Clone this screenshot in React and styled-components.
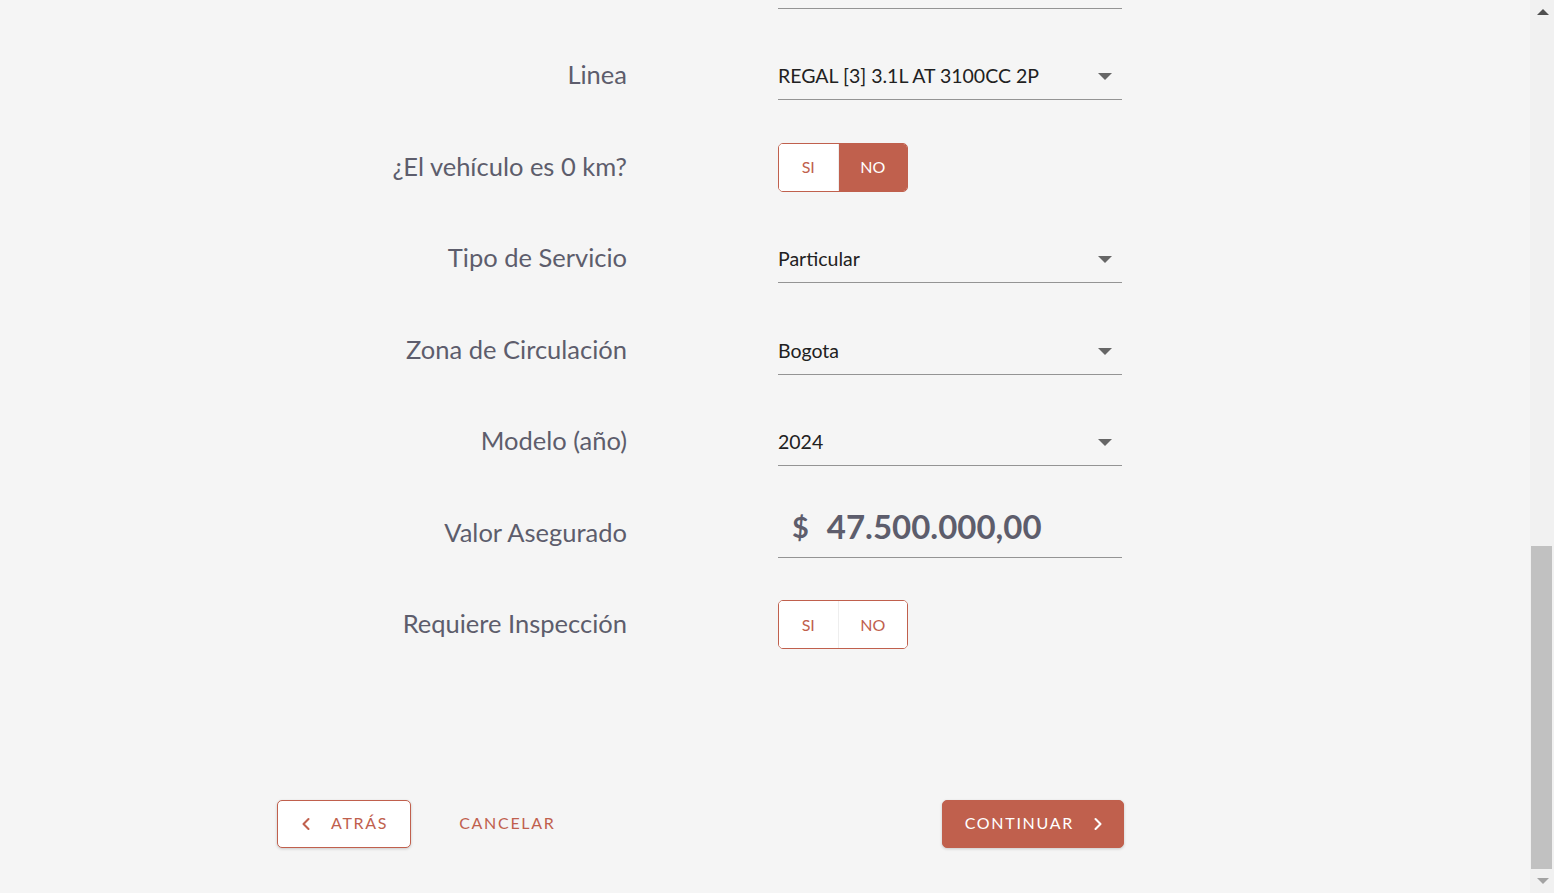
import { createGlobalStyle } from 'styled-components'
import styled from 'styled-components'
import { ChevronLeft, ChevronRight } from 'lucide-react'

const accent = '#c0604d'

const GlobalStyle = createGlobalStyle`
html, body {
    margin: 0;
    padding: 0;
    height: 100%;
    overflow: hidden;
    background: #f5f5f5;
    font-family: Lato, "Open Sans", sans-serif;
}
`

const Screen = styled.div`
display: flex;
height: 100vh;
width: 100vw;
`

const Viewport = styled.main`
flex: 1;
display: flex;
flex-direction: column;
justify-content: flex-end;
overflow: hidden;
`

const Content = styled.div`
width: 847px;
margin-left: 277px;
padding-bottom: 45px;
`

const Row = styled.div`
display: grid;
grid-template-columns: 350px 344px;
column-gap: 151px;
align-items: center;
height: 91.5px;
`

const Label = styled.label`
text-align: right;
font-size: 25.5px;
color: #5d5d6c;
margin-top: -2px;
`

const Select = styled.div`
display: flex;
align-items: center;
justify-content: space-between;
height: 50px;
box-sizing: border-box;
padding-top: 2px;
border-bottom: 1px solid #949494;
font-size: 19.5px;
color: #212121;
`

const Arrow = styled.span`
width: 0;
height: 0;
margin: 2px 10px 0 0;
border-left: 7px solid transparent;
border-right: 7px solid transparent;
border-top: 7px solid #666;
`

const Money = styled.div`
display: flex;
align-items: center;
height: 50px;
box-sizing: border-box;
padding-left: 14px;
padding-bottom: 12px;
border-bottom: 1px solid #949494;
color: #5d5d6c;
font-weight: 700;
`

const Currency = styled.span`
font-size: 29px;
margin-right: 18px;
`

const Amount = styled.span`
font-size: 33px;
`

const Toggle = styled.div`
display: flex;
width: 130px;
height: 49px;
margin-top: 1px;
box-sizing: border-box;
border: 1px solid ${accent};
border-radius: 5px;
overflow: hidden;
background: #fff;
`

const ToggleOption = styled.button`
display: flex;
align-items: center;
justify-content: center;
width: ${p => p.$wide ? 70 : 59}px;
border: none;
padding: 0 0 1px;
font-family: inherit;
font-size: 16px;
cursor: pointer;
color: ${p => p.$active ? '#fff' : accent};
background: ${p => p.$active ? accent : '#fff'};
& + & {
    border-left: 1px solid ${p => p.$active ? accent : '#eeeeee'};
}
`

const Actions = styled.div`
display: flex;
align-items: center;
margin-top: 130px;
`

const Button = styled.button`
display: flex;
align-items: center;
gap: ${p => p.$gap || 0}px;
height: 48px;
box-sizing: border-box;
padding: 0 ${p => p.$pr || 0}px 3px ${p => p.$pl || 0}px;
border-radius: 5px;
font-family: inherit;
font-size: 16px;
letter-spacing: 1.7px;
text-transform: uppercase;
cursor: pointer;
border: 1px solid ${p => p.$variant === 'text' ? 'transparent' : accent};
background: ${p => p.$variant === 'filled' ? accent : p.$variant === 'outline' ? '#fff' : 'transparent'};
color: ${p => p.$variant === 'filled' ? '#fff' : accent};
box-shadow: ${p => p.$variant === 'text' ? 'none' : '0 1px 3px rgba(0,0,0,0.18)'};
svg {
    flex-shrink: 0;
    margin-top: 3px;
}
`

const Spacer = styled.div`
flex: 1;
`

const Scrollbar = styled.div`
display: flex;
flex-direction: column;
width: 24px;
background: #f1f1f1;
`

const ScrollButton = styled.div`
display: flex;
align-items: center;
justify-content: center;
height: 24px;
padding-left: 2px;
&::after {
    content: '';
    width: 0;
    height: 0;
    border-left: 6px solid transparent;
    border-right: 6px solid transparent;
    ${p => p.$down
        ? 'border-top: 6px solid #a3a3a3;'
        : 'border-bottom: 6px solid #505050;'}
}
`

const Track = styled.div`
flex: 1;
display: flex;
flex-direction: column;
justify-content: flex-end;
padding-left: 1px;
`

const Thumb = styled.div`
width: 21px;
height: 323px;
background: #c1c1c1;
`

const fields = [
    { label: '', type: 'select', value: '' },
    { label: 'Linea', type: 'select', value: 'REGAL [3] 3.1L AT 3100CC 2P' },
    { label: '¿El vehículo es 0 km?', type: 'toggle', value: 'NO' },
    { label: 'Tipo de Servicio', type: 'select', value: 'Particular' },
    { label: 'Zona de Circulación', type: 'select', value: 'Bogota' },
    { label: 'Modelo (año)', type: 'select', value: '2024' },
    { label: 'Valor Asegurado', type: 'money', value: '47.500.000,00' },
    { label: 'Requiere Inspección', type: 'toggle', value: null },
]

const Field = ({ field }) => {
    if (field.type === 'toggle') {
        return (
            <Toggle>
                <ToggleOption $active={field.value === 'SI'}>SI</ToggleOption>
                <ToggleOption $wide $active={field.value === 'NO'}>NO</ToggleOption>
            </Toggle>
        )
    }
    if (field.type === 'money') {
        return (
            <Money>
                <Currency>$</Currency>
                <Amount>{field.value}</Amount>
            </Money>
        )
    }
    return (
        <Select>
            <span>{field.value}</span>
            {field.value && <Arrow />}
        </Select>
    )
}

const App = () => {
    return (
        <Screen>
            <GlobalStyle />
            <Viewport>
                <Content>
                    {fields.map((field, i) => (
                        <Row key={field.label || i}>
                            <Label>{field.label}</Label>
                            <Field field={field} />
                        </Row>
                    ))}
                    <Actions>
                        <Button $variant="outline" $pl={18} $pr={22} $gap={15}>
                            <ChevronLeft size={20} strokeWidth={2.5} />
                            Atrás
                        </Button>
                        <Button $variant="text" $pl={22} $pr={20} style={{ marginLeft: 25 }}>Cancelar</Button>
                        <Spacer />
                        <Button $variant="filled" $pl={22} $pr={15} $gap={14}>
                            Continuar
                            <ChevronRight size={20} strokeWidth={2.5} />
                        </Button>
                    </Actions>
                </Content>
            </Viewport>
            <Scrollbar>
                <ScrollButton />
                <Track>
                    <Thumb />
                </Track>
                <ScrollButton $down />
            </Scrollbar>
        </Screen>
    )
}

export default App
